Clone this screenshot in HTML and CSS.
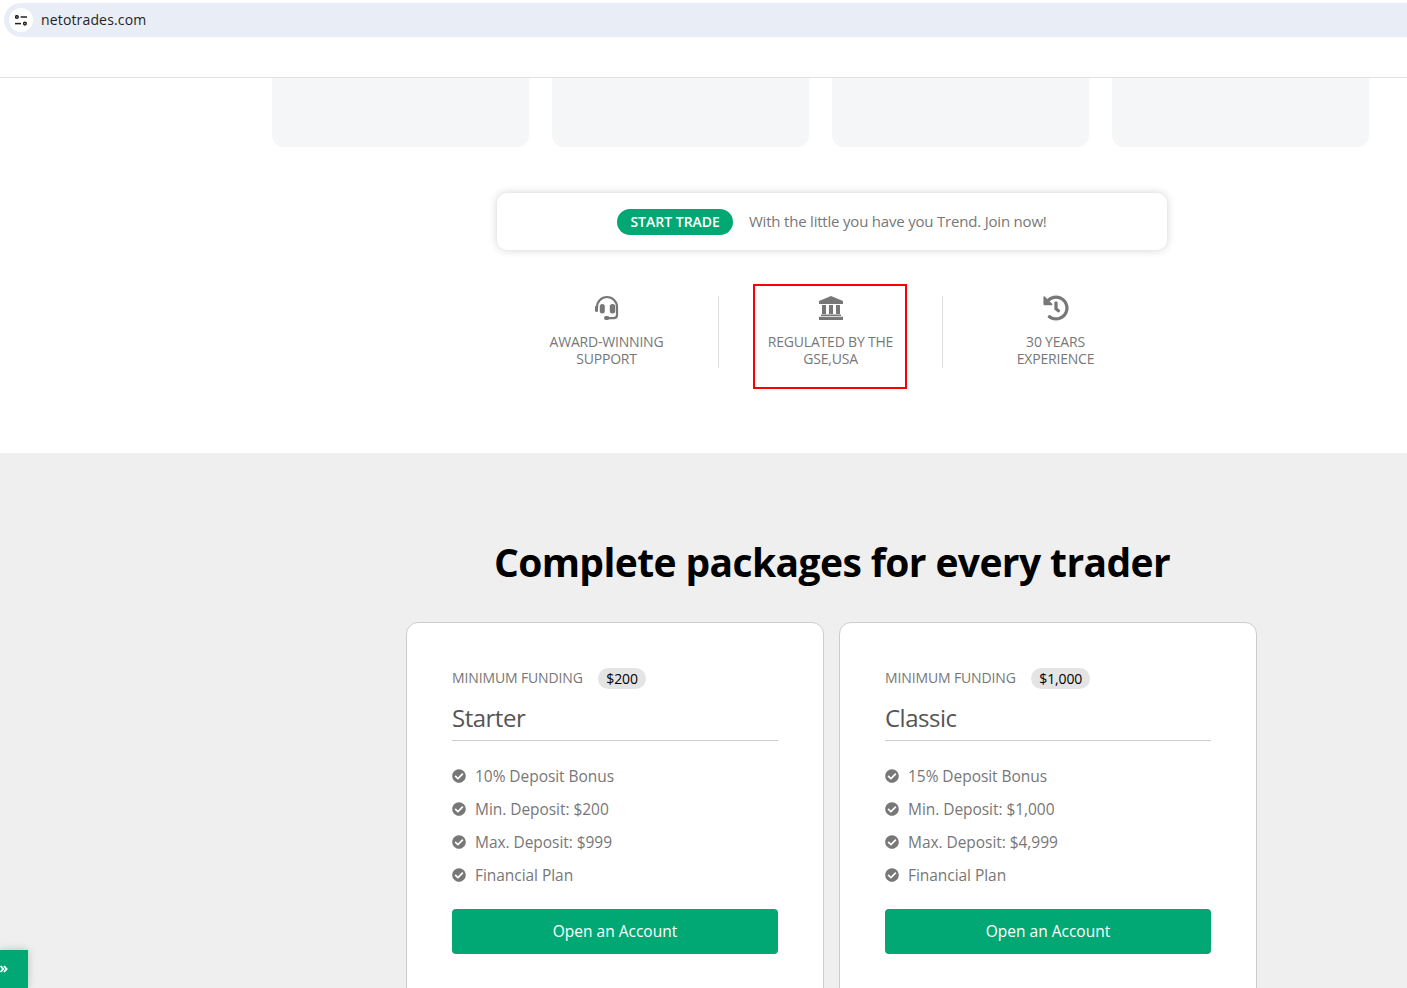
FILE: index.html
```html
<!DOCTYPE html>
<html lang="en">
<head>
  <meta charset="UTF-8" />
  <meta name="viewport" content="width=device-width, initial-scale=1" />
  <title>netotrades.com</title>
  <link rel="stylesheet" href="styles.css">
</head>
<body>
  <div class="browser-bar">
    <div class="address">
      <span class="site-icon">
        <svg width="12" height="11" viewBox="0 0 12 11" fill="none" stroke="#1f1f1f" stroke-width="1.5">
          <circle cx="1.9" cy="2" r="1.3"/>
          <path d="M5.6 2H12"/>
          <circle cx="9.9" cy="8.6" r="1.3"/>
          <path d="M0 8.6h6"/>
        </svg>
      </span>
      <span class="url">netotrades.com</span>
    </div>
  </div>
  <header class="topbar"></header>

  <div class="top-cards">
    <div></div>
    <div></div>
    <div></div>
    <div></div>
  </div>

  <div class="promo">
    <a class="promo-tag" href="#">START TRADE</a>
    <span class="promo-text">With the little you have you Trend. Join now!</span>
  </div>

  <div class="features">
    <div class="feature">
      <svg class="feature-icon" width="26" height="26" viewBox="-1 -1 26 26" fill="#777">
        <path d="M2 13v-2a10 10 0 0 1 20 0v8c0 2.400-1.400 3.200-3.500 3.200H14" fill="none" stroke="#777" stroke-width="2.2"/>
        <rect x="4.800" y="8" width="5" height="9.500" rx="2.500"/>
        <rect x="14.800" y="8" width="5.400" height="9.500" rx="2.500"/>
        <rect x="0" y="9.500" width="3" height="6.500" rx="1.500"/>
        <rect x="9" y="20" width="5.500" height="4" rx="2"/>
      </svg>
      <p>AWARD-WINNING<br>SUPPORT</p>
    </div>
    <div class="feature">
      <svg class="feature-icon" width="26" height="26" viewBox="-1 -1 26 26" fill="#777">
        <path d="M12 0 24 5V8H0V5z"/>
        <path d="M3 9h4v9H3zM10 9h4v9h-4zM17 9h4v9h-4zM2 18.500h20V20H2zM0 20.800h24V24H0z"/>
      </svg>
      <p>REGULATED BY THE<br>GSE,USA</p>
      <div class="highlight"></div>
    </div>
    <div class="feature">
      <svg class="feature-icon" width="26" height="26" viewBox="0 0 512 512" fill="#777">
        <path d="M504 255.531c.253 136.64-111.18 248.372-247.82 248.468-59.015.042-113.223-20.53-155.822-54.911-11.077-8.94-11.905-25.541-1.839-35.607l11.267-11.267c8.609-8.609 22.353-9.551 31.891-1.984C173.062 425.135 212.781 440 256 440c101.705 0 184-82.311 184-184 0-101.705-82.311-184-184-184-48.814 0-93.149 18.969-126.068 49.932l50.754 50.754c10.08 10.08 2.941 27.314-11.313 27.314H24c-8.837 0-16-7.163-16-16V38.627c0-14.254 17.234-21.393 27.314-11.314l49.372 49.372C129.209 34.136 189.552 8 256 8c136.81 0 247.747 110.78 248 247.531zm-180.912 78.784l9.823-12.63c8.138-10.463 6.253-25.542-4.21-33.679L288 256.349V152c0-13.255-10.745-24-24-24h-16c-13.255 0-24 10.745-24 24v135.651l65.409 50.874c10.463 8.137 25.541 6.253 33.679-4.21z"/>
      </svg>
      <p>30 YEARS<br>EXPERIENCE</p>
    </div>
  </div>

  <section class="packages">
    <h1>Complete packages for every trader</h1>
    <div class="package-grid">
      <div class="package">
        <div class="funding">MINIMUM FUNDING <span class="amount">$200</span></div>
        <h3>Starter</h3>
        <ul>
          <li><svg viewBox="0 0 512 512"><use href="#check"/></svg>10% Deposit Bonus</li>
          <li><svg viewBox="0 0 512 512"><use href="#check"/></svg>Min. Deposit: $200</li>
          <li><svg viewBox="0 0 512 512"><use href="#check"/></svg>Max. Deposit: $999</li>
          <li><svg viewBox="0 0 512 512"><use href="#check"/></svg>Financial Plan</li>
        </ul>
        <a class="open-btn" href="#">Open an Account</a>
      </div>
      <div class="package">
        <div class="funding">MINIMUM FUNDING <span class="amount">$1,000</span></div>
        <h3>Classic</h3>
        <ul>
          <li><svg viewBox="0 0 512 512"><use href="#check"/></svg>15% Deposit Bonus</li>
          <li><svg viewBox="0 0 512 512"><use href="#check"/></svg>Min. Deposit: $1,000</li>
          <li><svg viewBox="0 0 512 512"><use href="#check"/></svg>Max. Deposit: $4,999</li>
          <li><svg viewBox="0 0 512 512"><use href="#check"/></svg>Financial Plan</li>
        </ul>
        <a class="open-btn" href="#">Open an Account</a>
      </div>
    </div>
  </section>

  <a class="side-toggle" href="#">
    <svg width="8" height="8" viewBox="0 0 8 8" fill="none" stroke="#fff" stroke-width="1.9">
      <path d="M.6 1 3.2 4 .6 7M4 1l2.6 3L4 7"/>
    </svg>
  </a>

  <svg class="defs" width="0" height="0">
    <symbol id="check" viewBox="0 0 512 512">
      <path d="M504 256c0 136.967-111.033 248-248 248S8 392.967 8 256 119.033 8 256 8s248 111.033 248 248zM227.314 387.314l184-184c6.248-6.248 6.248-16.379 0-22.627l-22.627-22.627c-6.248-6.249-16.379-6.249-22.628 0L216 308.118l-70.059-70.059c-6.248-6.248-16.379-6.248-22.628 0l-22.627 22.627c-6.248 6.248-6.248 16.379 0 22.627l104 104c6.249 6.249 16.379 6.249 22.628 0z"/>
    </symbol>
  </svg>
</body>
</html>
```

FILE: styles.css
```css
html, body {
  height: 988px;
  overflow: hidden;
}
body {
  margin: 0;
  padding: 0;
  background: white;
  font-family: "Open Sans", "Noto Sans", Arial, sans-serif;
  color: #777;
  position: relative;
}
a {
  text-decoration: none;
}

/* browser address bar */
.browser-bar {
  padding: 3px 0 0 4px;
}
.address {
  height: 34px;
  background: #e9edf6;
  border-radius: 17px 0 0 17px;
  display: flex;
  align-items: center;
  padding-left: 5px;
  gap: 8px;
}
.site-icon {
  width: 24px;
  height: 24px;
  background: white;
  border-radius: 50%;
  display: flex;
  align-items: center;
  justify-content: center;
}
.url {
  font-size: 14px;
  letter-spacing: 0.15px;
  color: #1f1f1f;
  padding-bottom: 2px;
}
.topbar {
  height: 40px;
  background: white;
  border-bottom: 1px solid #e0e0e0;
}

.top-cards {
  display: grid;
  grid-template-columns: repeat(4, 257px);
  gap: 23px;
  padding-left: 272px;
}
.top-cards div {
  height: 69px;
  background: #f5f6f8;
  border-radius: 0 0 12px 12px;
}

.promo {
  width: 670px;
  height: 57px;
  margin: 46px 0 0 497px;
  background: white;
  border-radius: 10px;
  box-shadow: 0 0 8px rgba(0, 0, 0, 0.18);
  display: flex;
  align-items: center;
  justify-content: center;
  gap: 16px;
  font-size: 15px;
}
.promo-tag {
  background: #02a873;
  color: white;
  font-size: 14px;
  font-weight: 600;
  padding: 0 13px;
  line-height: 26px;
  border-radius: 13px;
}
.promo-text {
  letter-spacing: -0.2px;
  padding-bottom: 2px;
}

.features {
  display: grid;
  grid-template-columns: 223px 224px 226px;
  margin: 46px 0 0 495px;
  padding-bottom: 85px;
}
.feature {
  position: relative;
  height: 72px;
  text-align: center;
  border-left: 1px solid #ddd;
}
.feature:first-child {
  border-left: none;
}
.feature-icon {
  display: block;
  margin: -1px auto 0;
}
.feature p {
  margin: 12px 0 0;
  font-size: 14px;
  letter-spacing: -0.2px;
  line-height: 17px;
}
.highlight {
  position: absolute;
  left: 34px;
  top: -12px;
  width: 150px;
  height: 101px;
  border: 2px solid #f00;
}

.packages {
  background: #efefef;
  height: 535px;
  padding-top: 82px;
  box-sizing: border-box;
  overflow: hidden;
}
.packages h1 {
  margin: 0 0 33px 257px;
  height: 54px;
  line-height: 54px;
  font-size: 39px;
  letter-spacing: -0.6px;
  font-weight: 700;
  text-align: center;
  color: black;
}
.package-grid {
  display: grid;
  grid-template-columns: repeat(2, 418px);
  gap: 15px;
  padding-left: 406px;
}
.package {
  background: white;
  border: 1px solid #ccc;
  border-radius: 12px;
  height: 500px;
  padding: 44px 45px;
}
.funding {
  height: 22px;
  font-size: 14px;
  letter-spacing: -0.13px;
  line-height: 22px;
}
.amount {
  display: inline-block;
  margin-left: 12px;
  padding: 0 8px;
  line-height: 21px;
  vertical-align: -1px;
  background: #e4e4e4;
  border-radius: 11px;
  color: black;
}
.package h3 {
  margin: 8px 0 0;
  font-size: 24px;
  font-weight: 400;
  letter-spacing: -0.5px;
  line-height: 42px;
  height: 43px;
  color: #555;
  border-bottom: 1px solid #ccc;
}
.package ul {
  list-style: none;
  margin: 18px 0 0;
  padding: 0;
}
.package li {
  display: flex;
  align-items: center;
  gap: 9px;
  height: 33px;
  font-size: 15.5px;
  letter-spacing: -0.05px;
}
.package li svg {
  width: 14px;
  height: 14px;
  fill: #777;
}
.open-btn {
  display: block;
  margin-top: 18px;
  height: 45px;
  line-height: 45px;
  background: #02a873;
  color: white;
  text-align: center;
  font-size: 15.5px;
  border-radius: 4px;
}

.side-toggle {
  position: absolute;
  left: 0;
  bottom: 0;
  width: 28px;
  height: 38px;
  background: #02a873;
  box-shadow: 0 0 8px rgba(0, 0, 0, 0.2);
  display: flex;
  align-items: center;
}
.defs {
  position: absolute;
}
```
